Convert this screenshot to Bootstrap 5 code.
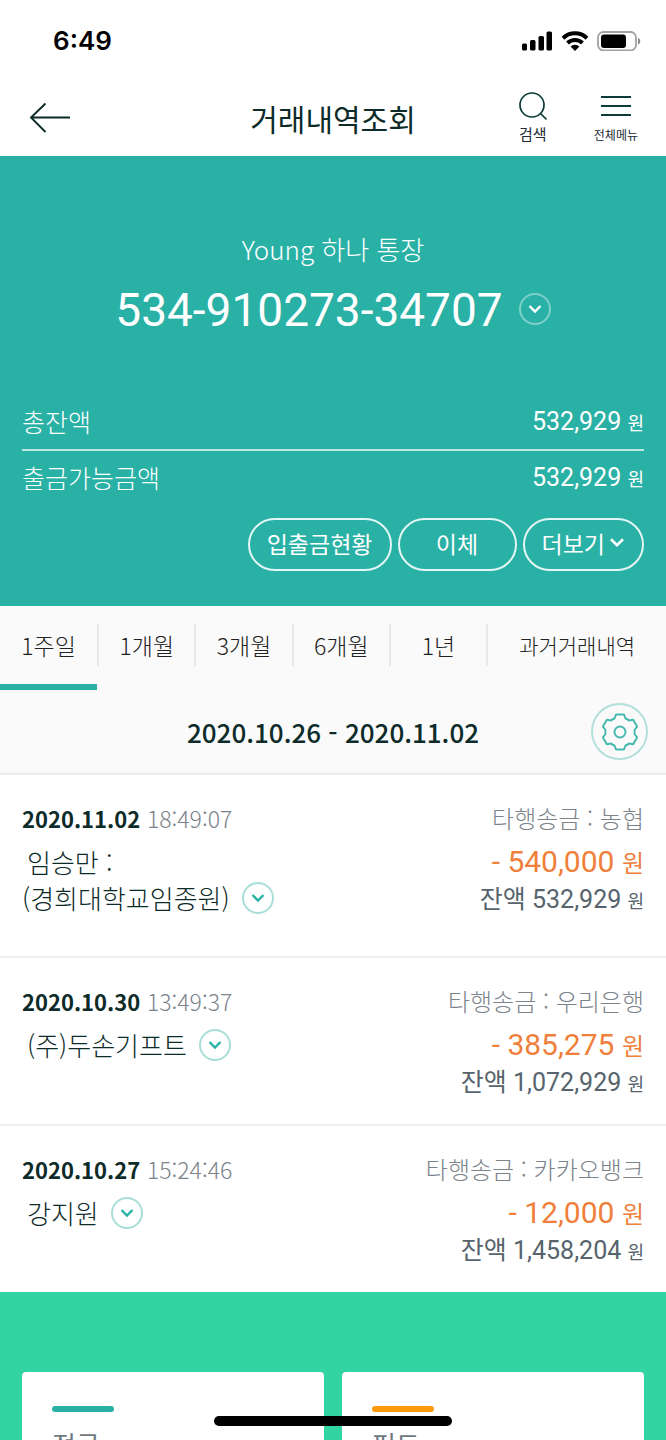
<!DOCTYPE html>
<html lang="ko">
<head>
<meta charset="utf-8">
<meta name="viewport" content="width=device-width, initial-scale=1">
<title>거래내역조회</title>
<link href="https://cdn.jsdelivr.net/npm/bootstrap@5.3.0/dist/css/bootstrap.min.css" rel="stylesheet">
<style>
  :root { --teal: #29b1a6; --ink: #0d2b29; }
  body { font-family: "Noto Sans CJK KR", sans-serif; color: var(--ink); background: #fff; }
  button { font-family: inherit; color: inherit; }
  svg { display: block; flex: none; }
  .plain-btn { background: none; border: 0; padding: 0; }
  .num { font-family: Roboto, "Noto Sans CJK KR", sans-serif; }
  .thin { font-weight: 300; }

  .status-bar { height: 82px; padding: 0 25px 0 53px; color: #000; }
  .clock { font: 600 26px/32px Inter, sans-serif; }

  .title-bar { display: grid; grid-template-columns: 1fr auto 1fr; height: 74px; padding: 0 28px 2px; }
  .title-bar h1 { font-size: 30px; line-height: 40px; font-weight: 400; }
  .tools { gap: 46px; }
  .tool-btn { font-size: 15px; line-height: 22px; color: #222b33; }
  .tool-btn.tight { font-size: 12px; line-height: 24px; }

  .account { background: var(--teal); color: #fff; padding: 73px 22px 35px; }
  .account-name { font-size: 26px; line-height: 40px; }
  .account-no { font-size: 46px; line-height: 60px; margin-top: 11px; }
  .round-btn { width: 32px; height: 32px; border: 2px solid #a9ded8; border-radius: 50%; color: var(--teal); background: none; padding: 0; display: flex; align-items: center; justify-content: center; flex: none; }
  .account .round-btn { border-color: #7fd0c9; color: #fff; }
  .balances { margin: 55px 0 13px; }
  .balance-row { font-size: 25px; line-height: 53px; }
  .balance-row + .balance-row { border-top: 2px solid #bfe7e3; }
  .won { font-family: "Noto Sans CJK KR", sans-serif; font-size: 18px; }
  .pills { gap: 6px; }
  .pill { height: 53px; min-width: 119px; padding: 0 17px 4px; border: 2px solid #e4f6f4; border-radius: 27px; background: none; color: #fff; font-size: 23px; line-height: 32px; }

  .filters { background: #fafafa; border-bottom: 2px solid #ebecee; }
  .period { flex: 0 0 14.6%; height: 84px; border-bottom: 6px solid transparent; color: #222; font-size: 23px; line-height: 42px; }
  .period span { display: block; }
  .period + .period span { border-left: 2px solid #e9e9ea; }
  .period.active { border-bottom-color: var(--teal); }
  .period.wide { flex: 1 1 0; font-size: 21px; }
  .range-row { display: grid; grid-template-columns: 1fr auto 1fr; height: 83px; padding: 0 18px; }
  .range { font-size: 26px; line-height: 40px; font-weight: 500; }
  .gear-btn { width: 57px; height: 57px; border: 2px solid #b3e0da; border-radius: 50%; color: #46b8ad; display: flex; align-items: center; justify-content: center; }

  .entry { padding: 23px 22px 21px; border-bottom: 2px solid #f0f0f1; }
  .entry:last-child { border-bottom: 0; }
  .entry.two-line { padding-bottom: 36px; }
  .entry-head { font-size: 24px; line-height: 40px; margin-bottom: 6px; }
  .entry-head b { font-size: 22px; font-weight: 600; }
  .entry-head .time { font-size: 23px; }
  .muted { color: #7b838b; }
  .payee { font-size: 26px; line-height: 36px; }
  .payee-line { display: flex; align-items: center; gap: 12px; }
  .indent { padding-left: 5px; }
  .amount { font-size: 30px; line-height: 36px; color: #ef7f3a; }
  .amount .won { font-size: 24px; }
  .after { font-size: 25px; line-height: 40px; color: #57646d; }

  .offers { background: #32d4a2; padding: 80px 22px 0; min-height: 0; }
  .offer-row { gap: 18px; }
  .offer { background: #fff; border-radius: 4px; padding: 34px 30px 0; height: 200px; color: #6e7880; font-size: 26px; line-height: 36px; text-decoration: none; flex: 1 1 0; }
  .offer i { display: block; width: 62px; height: 6px; border-radius: 3px; background: var(--teal); margin-bottom: 14px; }
  .offer i.orange { background: #fb9a0c; }
  .home-bar { width: 238px; height: 10px; border-radius: 5px; background: #000; margin: 0 auto 14px; }
</style>
</head>
<body>
<svg width="0" height="0" class="position-absolute" aria-hidden="true">
  <symbol id="chev" viewBox="0 0 14 10"><path d="M1.500 2 7 7.500 12.500 2" fill="none" stroke="currentColor" stroke-width="2.400"/></symbol>
</svg>
<div class="vh-100 d-flex flex-column overflow-hidden">

  <div class="status-bar d-flex align-items-center justify-content-between flex-shrink-0">
    <span class="clock">6:49</span>
    <div class="d-flex align-items-center gap-2">
      <svg width="32" height="20" viewBox="0 0 32 20"><rect x="1" y="12.500" width="5" height="7" rx="1.500"/><rect x="9" y="9" width="5.500" height="10.500" rx="1.500"/><rect x="17.500" y="5" width="5.500" height="14.500" rx="1.500"/><rect x="25.500" y="0.500" width="5.500" height="19" rx="1.500"/></svg>
      <svg width="28" height="20" viewBox="0 0 28 20"><g fill="none" stroke="#000" stroke-width="4"><path d="M2 7.200a17.300 17.300 0 0 1 24 0"/><path d="M6.500 12a10.900 10.900 0 0 1 15 0"/></g><path d="M9.600 15.500a6.500 6.500 0 0 1 8.800 0L14 20z"/></svg>
      <svg width="44" height="20" viewBox="0 0 44 20"><rect x="1" y="1" width="38" height="18.500" rx="5.500" fill="none" stroke="#a2a2a2" stroke-width="1.800"/><rect x="4" y="3.500" width="25" height="13.500" rx="3"/><path d="M41 7c3 1 3 5.500 0 6.500z" fill="#8b8b8b"/></svg>
    </div>
  </div>

  <header class="title-bar align-items-center flex-shrink-0">
    <button class="plain-btn text-start" type="button" aria-label="뒤로">
      <svg width="42" height="32" viewBox="0 0 42 32" fill="none" stroke="#0d2b29" stroke-width="1.900"><path d="M17.500 1.500 3 15.500l14.500 14.500M3 15.500h39"/></svg>
    </button>
    <h1 class="m-0">거래내역조회</h1>
    <div class="tools d-flex justify-content-end">
      <button class="plain-btn tool-btn d-flex flex-column align-items-center" type="button">
        <svg width="30" height="34" viewBox="0 0 30 34" fill="none" stroke="#0d3b37" stroke-width="1.700"><circle cx="14" cy="16" r="12"/><path d="m22.500 24.500 6 6"/></svg>
        검색
      </button>
      <button class="plain-btn tool-btn tight d-flex flex-column align-items-center" type="button">
        <svg width="30" height="34" viewBox="0 0 30 34" fill="none" stroke="#0d3b37" stroke-width="1.800"><path d="M0 8h30M0 17h30M0 26h30"/></svg>
        전체메뉴
      </button>
    </div>
  </header>

  <section class="account flex-shrink-0">
    <div class="account-name thin text-center">Young 하나 통장</div>
    <div class="d-flex align-items-center justify-content-center gap-3">
      <div class="account-no num">534-910273-34707</div>
      <button class="round-btn mt-2" type="button" aria-label="계좌 선택"><svg width="14" height="10"><use href="#chev"/></svg></button>
    </div>
    <div class="balances">
      <div class="balance-row d-flex justify-content-between"><span class="thin">총잔액</span><span class="num">532,929 <span class="won">원</span></span></div>
      <div class="balance-row d-flex justify-content-between"><span class="thin">출금가능금액</span><span class="num">532,929 <span class="won">원</span></span></div>
    </div>
    <div class="pills d-flex justify-content-end">
      <button class="pill" type="button">입출금현황</button>
      <button class="pill" type="button">이체</button>
      <button class="pill d-flex align-items-center gap-1" type="button">더보기 <svg width="16" height="11"><use href="#chev"/></svg></button>
    </div>
  </section>

  <section class="filters flex-shrink-0">
    <div class="d-flex">
      <button class="plain-btn period thin active" type="button"><span>1주일</span></button>
      <button class="plain-btn period thin" type="button"><span>1개월</span></button>
      <button class="plain-btn period thin" type="button"><span>3개월</span></button>
      <button class="plain-btn period thin" type="button"><span>6개월</span></button>
      <button class="plain-btn period thin" type="button"><span>1년</span></button>
      <button class="plain-btn period wide thin" type="button"><span>과거거래내역</span></button>
    </div>
    <div class="range-row align-items-center">
      <span></span>
      <div class="range">2020.10.26 - 2020.11.02</div>
      <button class="plain-btn gear-btn ms-auto" type="button" aria-label="조회 설정">
        <svg width="40" height="40" viewBox="-20 -20 40 40" fill="none" stroke="currentColor" stroke-width="1.900" stroke-linejoin="round"><path d="M-4-17.500H4L5.500-13.500Q7.500-13 8.940-11.500L13.160-12.200 17.160-5.290 14.440-2Q15 0 14.440 2L17.160 5.290 13.160 12.200 8.940 11.500Q7.500 13 5.500 13.500L4 17.500H-4L-5.500 13.500Q-7.500 13-8.940 11.500L-13.160 12.200-17.160 5.290-14.440 2Q-15 0-14.440-2L-17.160-5.290-13.160-12.200-8.940-11.500Q-7.500-13-5.500-13.500Z"/><circle r="5.500"/></svg>
      </button>
    </div>
  </section>

  <main class="flex-shrink-0">
    <article class="entry two-line">
      <div class="entry-head d-flex justify-content-between"><span><b>2020.11.02</b> <span class="time muted thin">18:49:07</span></span><span class="muted thin">타행송금 : 농협</span></div>
      <div class="d-flex justify-content-between">
        <div class="payee thin"><div class="indent">임승만 :</div><div class="payee-line">(경희대학교임종원) <button class="round-btn" type="button" aria-label="상세"><svg width="14" height="10"><use href="#chev"/></svg></button></div></div>
        <div class="text-end"><div class="amount num">- 540,000 <span class="won">원</span></div><div class="after num">잔액 532,929 <span class="won">원</span></div></div>
      </div>
    </article>
    <article class="entry">
      <div class="entry-head d-flex justify-content-between"><span><b>2020.10.30</b> <span class="time muted thin">13:49:37</span></span><span class="muted thin">타행송금 : 우리은행</span></div>
      <div class="d-flex justify-content-between">
        <div class="payee thin"><div class="indent payee-line">(주)두손기프트 <button class="round-btn" type="button" aria-label="상세"><svg width="14" height="10"><use href="#chev"/></svg></button></div></div>
        <div class="text-end"><div class="amount num">- 385,275 <span class="won">원</span></div><div class="after num">잔액 1,072,929 <span class="won">원</span></div></div>
      </div>
    </article>
    <article class="entry">
      <div class="entry-head d-flex justify-content-between"><span><b>2020.10.27</b> <span class="time muted thin">15:24:46</span></span><span class="muted thin">타행송금 : 카카오뱅크</span></div>
      <div class="d-flex justify-content-between">
        <div class="payee thin"><div class="indent payee-line">강지원 <button class="round-btn" type="button" aria-label="상세"><svg width="14" height="10"><use href="#chev"/></svg></button></div></div>
        <div class="text-end"><div class="amount num">- 12,000 <span class="won">원</span></div><div class="after num">잔액 1,458,204 <span class="won">원</span></div></div>
      </div>
    </article>
  </main>

  <section class="offers flex-grow-1 overflow-hidden">
    <div class="offer-row d-flex">
      <a class="offer" href="#"><i></i>적금</a>
      <a class="offer" href="#"><i class="orange"></i>펀드</a>
    </div>
  </section>
</div>
<div class="fixed-bottom"><div class="home-bar"></div></div>
<script src="https://cdn.jsdelivr.net/npm/bootstrap@5.3.0/dist/js/bootstrap.bundle.min.js"></script>
</body>
</html>
